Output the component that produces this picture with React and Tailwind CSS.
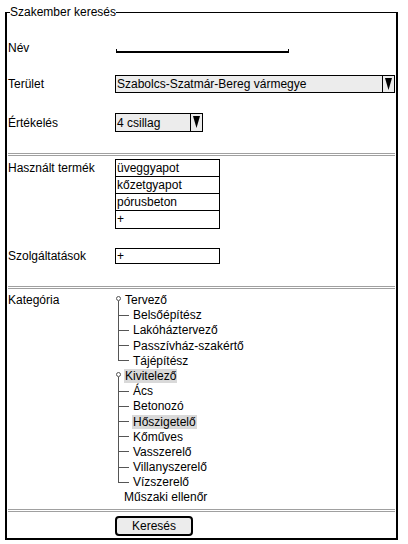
import React from 'react'

const Arrow = () => (
  <div className="w-[12px] shrink-0 border-l border-black flex justify-center items-start pt-[2px]">
    <svg width="7" height="12" viewBox="0 0 7 12">
      <polygon points="0,0 7,0 3.5,12" fill="black" />
    </svg>
  </div>
)

function Select({ value, className }) {
  return (
    <div className={`flex h-full border border-black bg-[#ececec] ${className}`}>
      <div className="flex-1 flex items-center pl-[1px]">{value}</div>
      <Arrow />
    </div>
  )
}

const Separator = ({ className }) => (
  <div className={`border-t-[3px] border-double border-[#a0a0a0] ${className}`} />
)

function Child({ label, last, selected }) {
  return (
    <div className="flex h-[15.2px] leading-[15.2px]">
      <div className="ml-[3px] w-[11px] flex flex-col">
        <div className="h-1/2 border-l border-b border-[#555]" />
        <div className={last ? 'h-1/2' : 'h-1/2 border-l border-[#555]'} />
      </div>
      <div className="ml-[3px]">
        <span className={selected ? 'bg-[#d9d9d9] px-[1px]' : 'px-[1px]'}>{label}</span>
      </div>
    </div>
  )
}

function Group({ label, items, selected, picked }) {
  return (
    <div>
      <div className="flex h-[15.2px] leading-[15.2px]">
        <div className="ml-[1px] w-[5px] flex flex-col">
          <div className="mt-[3px] w-[5px] h-[5px] rounded-full border border-[#555]" />
          <div className="ml-[2px] w-px flex-1 bg-[#555]" />
        </div>
        <div className="ml-[3px]">
          <span className={selected ? 'bg-[#d9d9d9] px-[1px]' : 'px-[1px]'}>{label}</span>
        </div>
      </div>
      {items.map((it, i) => (
        <Child key={it} label={it} last={i === items.length - 1} selected={it === picked} />
      ))}
    </div>
  )
}

export default function App() {
  const products = ['üveggyapot', 'kőzetgyapot', 'pórusbeton', '+']
  return (
    <div className="font-['Liberation_Sans',Arial,sans-serif] text-[12px] text-black bg-white min-h-[544px] pt-[5px]">
      <fieldset className="ml-[5px] w-[393px] border-2 border-t border-black px-[1px] pb-[2px]">
        <legend className="ml-[2px] leading-[14px]">Szakember keresés</legend>

        <div className="flex mt-[22px] h-[14px] leading-[14px]">
          <div className="w-[107px] shrink-0">Név</div>
          <div className="self-end mb-[2px] ml-[1px] w-[173px] h-[4px] border-x border-b-2 border-black" />
        </div>

        <div className="flex items-center mt-[20px] h-[18px]">
          <div className="w-[107px] shrink-0">Terület</div>
          <Select value="Szabolcs-Szatmár-Bereg vármegye" className="flex-1" />
        </div>

        <div className="flex items-center mt-[20px] h-[19px]">
          <div className="w-[107px] shrink-0">Értékelés</div>
          <Select value="4 csillag" className="w-[88px]" />
        </div>

        <Separator className="mt-[21px]" />

        <div className="flex mt-[3px]">
          <div className="w-[107px] shrink-0 leading-[18px]">Használt termék</div>
          <div className="w-[105px] border border-black">
            {products.map((p, i) => (
              <div
                key={p}
                className={`h-[17px] leading-[16px] pl-[1px] ${i < products.length - 1 ? 'border-b border-black' : ''}`}
              >
                {p}
              </div>
            ))}
          </div>
        </div>

        <div className="flex items-center mt-[19px] h-[16px]">
          <div className="w-[107px] shrink-0">Szolgáltatások</div>
          <div className="w-[105px] h-full border border-black pl-[1px] leading-[14px]">+</div>
        </div>

        <Separator className="mt-[22px]" />

        <div className="flex mt-[4px]">
          <div className="w-[107px] shrink-0 leading-[15.2px]">Kategória</div>
          <div>
            <Group
              label="Tervező"
              items={['Belsőépítész', 'Lakóháztervező', 'Passzívház-szakértő', 'Tájépítész']}
            />
            <Group
              label="Kivitelező"
              selected
              picked="Hőszigetelő"
              items={['Ács', 'Betonozó', 'Hőszigetelő', 'Kőműves', 'Vasszerelő', 'Villanyszerelő', 'Vízszerelő']}
            />
            <div className="h-[15.2px] leading-[15.2px] pl-[9px]">Műszaki ellenőr</div>
          </div>
        </div>

        <Separator className="mt-[3px]" />

        <div className="flex mt-[4px]">
          <div className="w-[107px] shrink-0" />
          <button className="w-[78px] h-[20px] border-2 border-black rounded-[4px] bg-[#ececec] leading-[16px]">
            Keresés
          </button>
        </div>
      </fieldset>
    </div>
  )
}
